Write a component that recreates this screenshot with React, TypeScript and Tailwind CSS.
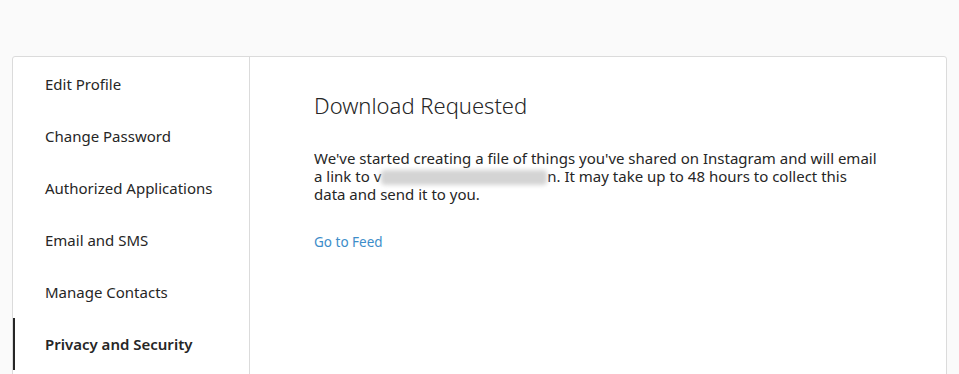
const NAV_ITEMS = [
  "Edit Profile",
  "Change Password",
  "Authorized Applications",
  "Email and SMS",
  "Manage Contacts",
  "Privacy and Security",
];

const ACTIVE = "Privacy and Security";

export default function App() {
  return (
    <div
      className="h-[374px] overflow-hidden bg-[#fafafa] pt-[56px] px-[12px] text-[#262626]"
      style={{ fontFamily: '"Noto Sans", "Open Sans", Arial, sans-serif' }}
    >
      <div className="flex bg-white border border-[#dbdbdb] rounded-[3px] min-h-[330px]">
        {/* Sidebar */}
        <ul className="w-[237px] shrink-0 border-r border-[#dbdbdb] pt-[1px]">
          {NAV_ITEMS.map((item) => {
            const active = item === ACTIVE;
            return (
              <li
                key={item}
                className={
                  active
                    ? "border-l-2 border-[#262626] pl-[30px] py-[16px] text-[15px] leading-[20px] font-semibold"
                    : "border-l-2 border-transparent pl-[30px] py-[16px] text-[15px] leading-[20px]"
                }
              >
                {item}
              </li>
            );
          })}
        </ul>

        {/* Content */}
        <div className="flex-1 pl-[64px] pr-[60px] pt-[34px]">
          <h1 className="text-[22px] leading-[28px] font-light">Download Requested</h1>
          <p className="mt-[30px] text-[15px] leading-[18px] max-w-[566px]">
            We've started creating a file of things you've shared on Instagram and will email a link to v
            <span className="inline-block align-middle w-[166px] h-[15px] bg-[#d4d4d4] blur-[2px] rounded-sm" />
            n. It may take up to 48 hours to collect this data and send it to you.
          </p>
          <a href="#" className="block mt-[30px] text-[13.5px] leading-[18px] text-[#3d8dc9]">
            Go to Feed
          </a>
        </div>
      </div>
    </div>
  );
}
